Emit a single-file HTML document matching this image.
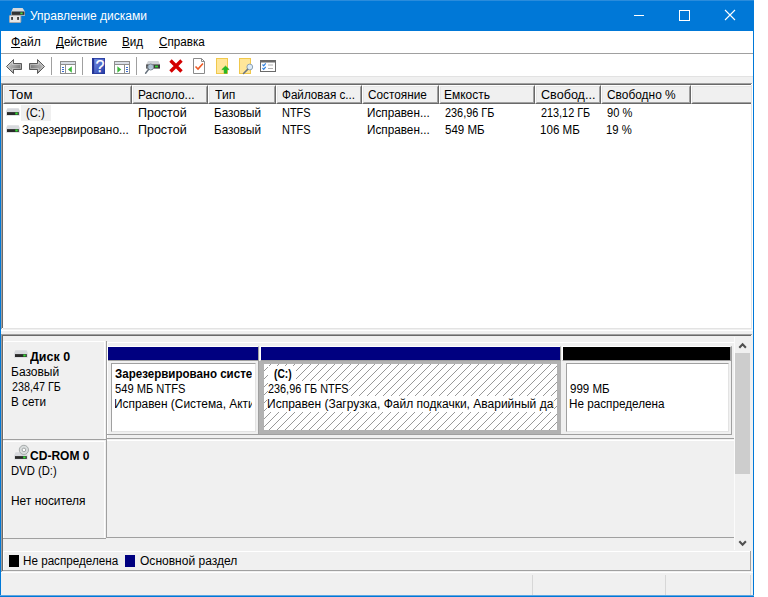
<!DOCTYPE html>
<html lang="ru"><head><meta charset="utf-8"><title>Управление дисками</title>
<style>
html,body{margin:0;padding:0;background:#fff;}
body{width:768px;height:597px;position:relative;overflow:hidden;font:12px "Liberation Sans",sans-serif;color:#000;}
.a{position:absolute;}
.t{position:absolute;white-space:nowrap;font:12px/16px "Liberation Sans",sans-serif;transform-origin:0 50%;}
.b{font-weight:bold;}
#win{position:absolute;left:0;top:0;width:754px;height:597px;background:#f0f0f0;overflow:hidden;}
#title{position:absolute;left:0;top:0;width:754px;height:31px;background:#0078d7;}
#menu{position:absolute;left:1px;top:31px;width:752px;height:22px;background:#fff;}
#tool{position:absolute;left:1px;top:54px;width:752px;height:22px;background:#fff;}
.hc{position:absolute;top:85px;height:19px;box-sizing:border-box;background:#f0f0f0;border-top:1px solid #fff;border-left:1px solid #fff;border-right:1px solid #696969;border-bottom:1px solid #696969;}
.hc i{position:absolute;left:0;top:0;right:0;bottom:0;border-right:1px solid #a0a0a0;border-bottom:1px solid #a0a0a0;border-top:1px solid #e6e6e6;border-left:1px solid #e6e6e6;}
u{text-decoration:underline;text-underline-offset:1px;text-decoration-skip-ink:none;}
</style></head><body>
<div id="win">
 <div id="title"></div><div class="a" style="left:0;top:0;width:754px;height:1px;background:#2a8cdc"></div>
 <div class="t" style="left:30px;top:8px;color:#fff;transform:scaleX(1.000)" id="tt">Управление дисками</div>
 <!-- caption buttons -->
 <svg class="a" style="left:620px;top:0" width="134" height="31" viewBox="0 0 134 31" fill="none" stroke="#fff" stroke-width="1">
  <path d="M14 15.5h10"/><rect x="59.5" y="10.5" width="10" height="10"/><path d="M105 10l10 10M115 10l-10 10" stroke-width="1.1"/>
 </svg>
 <!-- title icon -->
 <svg class="a" style="left:8px;top:7px" width="18" height="17" viewBox="8 7 18 17">
  <path d="M13 8 L22.6 8 L24.8 11.6 L11.4 11.6 Z" fill="#d6d9dc"/>
  <rect x="11.2" y="11.4" width="13.8" height="4.3" fill="#d0d0d0"/>
  <rect x="11.7" y="11.6" width="12.8" height="3.3" fill="#333"/>
  <rect x="20.4" y="12.5" width="2.2" height="1.7" fill="#3fe03f"/>
  <rect x="9.5" y="15.5" width="11.3" height="7" rx="0.6" fill="#e6e6e6" stroke="#b0aca8" stroke-width="0.9"/>
  <rect x="11.2" y="17" width="1.7" height="2.9" fill="#303030"/>
  <rect x="17.2" y="17" width="1.7" height="2.9" fill="#303030"/>
 </svg>
 <div id="menu"></div>
 <div class="a" style="left:1px;top:53px;width:752px;height:1px;background:#a0a0a0"></div>
 <div class="t" style="left:10.74px;top:34px;transform:scaleX(1.007)" id="m1"><u>Ф</u>айл</div>
 <div class="t" style="left:56px;top:34px;transform:scaleX(0.970)" id="m2"><u>Д</u>ействие</div>
 <div class="t" style="left:122.02px;top:34px;transform:scaleX(0.976)" id="m3"><u>В</u>ид</div>
 <div class="t" style="left:158.71px;top:34px;transform:scaleX(0.973)" id="m4"><u>С</u>правка</div>
 <div id="tool"></div>
 <svg class="a" style="left:0;top:54px" width="300" height="22" viewBox="0 54 300 22">
  <defs>
   <linearGradient id="ga" x1="0" y1="0.2" x2="1" y2="0.8"><stop offset="0" stop-color="#cfcfcf"/><stop offset="0.55" stop-color="#9c9c9c"/><stop offset="1" stop-color="#686868"/></linearGradient><linearGradient id="gb" x1="1" y1="0.2" x2="0" y2="0.8"><stop offset="0" stop-color="#c4c4c4"/><stop offset="0.55" stop-color="#969696"/><stop offset="1" stop-color="#6c6c6c"/></linearGradient>
   <linearGradient id="gh" x1="0" y1="0" x2="1" y2="1"><stop offset="0" stop-color="#7c98ee"/><stop offset="1" stop-color="#2238a4"/></linearGradient>
  </defs>
  <!-- back -->
  <path d="M6.5 66.5 L13.5 59.5 L13.5 63.5 L21.5 63.5 L21.5 69.5 L13.5 69.5 L13.5 73.5 Z" fill="url(#ga)" stroke="#5a5a5a" stroke-width="1" stroke-linejoin="round"/><path d="M7.9 66.5 L12.5 61.9 L12.5 64.5 L20.5 64.5 L20.5 68.5 L12.5 68.5 L12.5 71.1 Z" fill="none" stroke="#fff" stroke-opacity="0.35" stroke-width="1"/>
  <!-- forward -->
  <path d="M44.5 66.5 L37.5 59.5 L37.5 63.5 L29.5 63.5 L29.5 69.5 L37.5 69.5 L37.5 73.5 Z" fill="url(#gb)" stroke="#5a5a5a" stroke-width="1" stroke-linejoin="round"/><path d="M43.1 66.5 L38.5 61.9 L38.5 64.5 L30.5 64.5 L30.5 68.5 L38.5 68.5 L38.5 71.1 Z" fill="none" stroke="#fff" stroke-opacity="0.35" stroke-width="1"/>
  <rect x="51" y="57" width="1" height="18" fill="#a0a0a0"/>
  <!-- console tree -->
  <rect x="60.5" y="61.5" width="15" height="12" fill="#fff" stroke="#8e8e8e"/>
  <rect x="61" y="62" width="14" height="2" fill="#d9dde6"/>
  <path d="M60.5 64.5h15M65.5 64.5v9" stroke="#8e8e8e" fill="none"/>
  <path d="M62 67.5h2M62 69.5h2M62 71.5h2" stroke="#3c6cd0"/>
  <path d="M71.8 66.3 L68 69.5 L71.8 72.7 Z" fill="#3cb83c"/>
  <rect x="82" y="57" width="1" height="18" fill="#a0a0a0"/>
  <!-- help -->
  <rect x="92" y="58" width="13" height="16" fill="url(#gh)"/>
  <rect x="92" y="58" width="2.2" height="16" fill="#24348f"/>
  <rect x="92.5" y="58.5" width="12" height="15" fill="none" stroke="#26389a" stroke-opacity="0.8"/>
  <text x="100" y="71.7" text-anchor="middle" font-family="Liberation Sans, sans-serif" font-size="16" fill="#fff" stroke="#fff" stroke-width="0.25">?</text>
  <!-- action pane -->
  <rect x="114.5" y="61.5" width="15" height="12" fill="#fff" stroke="#8e8e8e"/>
  <rect x="115" y="62" width="14" height="2" fill="#d9dde6"/>
  <path d="M114.5 64.5h15M124.5 64.5v9" stroke="#8e8e8e" fill="none"/>
  <path d="M126 67.5h2M126 69.5h2M126 71.5h2" stroke="#3c6cd0"/>
  <path d="M117.4 66.3 L121.2 69.5 L117.4 72.7 Z" fill="#3cb83c"/>
  <rect x="136" y="57" width="1" height="18" fill="#a0a0a0"/>
  <!-- rescan disks -->
  <path d="M148 61 L158.5 61 L160 64.4 L146.2 64.4 Z" fill="#d0d3d7"/>
  <rect x="146.2" y="64.4" width="13.8" height="4.2" fill="#3a3a3a"/>
  <rect x="155" y="65.6" width="3" height="1.8" fill="#35d335"/>
  <circle cx="150.7" cy="67" r="3" fill="#c4dcf0" fill-opacity="0.85" stroke="#7d8894" stroke-width="1"/>
  <path d="M148.6 69.3 L145.6 73.2" stroke="#6a7580" stroke-width="1.5" stroke-linecap="round"/>
  <!-- delete -->
  <path d="M170.5 60.5 L181.5 71.5 M181.5 60.5 L170.5 71.5" stroke="#d40000" stroke-width="3.4" stroke-linecap="butt"/>
  <!-- properties doc -->
  <path d="M193.5 58.5 L201.5 58.5 L204.5 61.5 L204.5 73.5 L193.5 73.5 Z" fill="#fff" stroke="#8a8a8a"/>
  <path d="M201.5 58.5 L201.5 61.5 L204.5 61.5" fill="none" stroke="#8a8a8a"/>
  <path d="M195.5 66.5 L198 69 L203 63.5" fill="none" stroke="#ee5a24" stroke-width="1.6"/>
  <!-- folder up -->
  <rect x="216.5" y="58.5" width="11" height="15" fill="#ffe699" stroke="#f0c84c"/>
  <path d="M225.5 66 L229.2 69.6 L226.9 69.6 L226.9 73.3 L224.1 73.3 L224.1 69.6 L221.8 69.6 Z" fill="#22bc22" stroke="#18a018" stroke-width="0.5"/>
  <!-- folder search -->
  <rect x="239.5" y="58.5" width="11" height="15" fill="#ffe699" stroke="#f0c84c"/>
  <circle cx="249.8" cy="67" r="2.9" fill="#dcebf7" stroke="#8fa3b5" stroke-width="1"/>
  <path d="M247.6 69.4 L243.5 73.5" stroke="#6a7580" stroke-width="1.5" stroke-linecap="round"/>
  <!-- options -->
  <rect x="260.5" y="60.5" width="15" height="11" fill="#fff" stroke="#6a6a6a"/>
  <rect x="261" y="61" width="14" height="1.5" fill="#6a6a6a"/>
  <path d="M262.5 64.5 L263.7 65.8 L265.7 63.3 M262.5 68 L263.7 69.3 L265.7 66.8" fill="none" stroke="#2b7fe0" stroke-width="1.2"/>
  <path d="M268 65h5M268 68.5h5" stroke="#b0b0b0" stroke-width="1"/>
 </svg>
 <div class="a" style="left:1px;top:76px;width:752px;height:1px;background:#e2e2e2"></div>
 <!-- list view -->
 <div class="a" style="left:1px;top:83px;width:752px;height:246px;background:#fff;border-top:1px solid #a0a0a0;border-left:1px solid #a0a0a0;box-sizing:border-box"></div>
 <div class="a" style="left:2px;top:84px;width:749px;height:244px;background:#fff;border-top:1px solid #696969;border-left:1px solid #696969;box-sizing:border-box"></div>
 <div class="hc" style="left:3px;width:129px"><i></i></div>
 <div class="hc" style="left:132px;width:76px"><i></i></div>
 <div class="hc" style="left:208px;width:68px"><i></i></div>
 <div class="hc" style="left:276px;width:86px"><i></i></div>
 <div class="hc" style="left:362px;width:77px"><i></i></div>
 <div class="hc" style="left:439px;width:96px"><i></i></div>
 <div class="hc" style="left:535px;width:66px"><i></i></div>
 <div class="hc" style="left:601px;width:90px"><i></i></div>
 <div class="hc" style="left:691px;width:63px"><i></i></div>
 <div class="t" style="left:9.12px;top:87px;transform:scaleX(1.101)" id="h1">Том</div>
 <div class="t" style="left:137.76px;top:87px;transform:scaleX(0.992)" id="h2">Располо...</div>
 <div class="t" style="left:214.55px;top:87px;transform:scaleX(1.011)" id="h3">Тип</div>
 <div class="t" style="left:281.77px;top:87px;transform:scaleX(0.973)" id="h4">Файловая с...</div>
 <div class="t" style="left:367.81px;top:87px;transform:scaleX(0.982)" id="h5">Состояние</div>
 <div class="t" style="left:444.2px;top:87px;transform:scaleX(0.998)" id="h6">Емкость</div>
 <div class="t" style="left:540.73px;top:87px;transform:scaleX(1.050)" id="h7">Свобод...</div>
 <div class="t" style="left:606.5px;top:87px;transform:scaleX(0.993)" id="h8">Свободно %</div>
 <!-- rows -->
 <div class="a" style="left:21px;top:105px;width:30px;height:16px;background:#f0f0f0"></div>
 <div class="t" style="left:26.3px;top:105px;transform:scaleX(0.935)" id="r1a">(C:)</div>
 <div class="t" style="left:137.71px;top:105px;transform:scaleX(1.041)" id="r1b">Простой</div>
 <div class="t" style="left:213.82px;top:105px;transform:scaleX(0.977)" id="r1c">Базовый</div>
 <div class="t" style="left:281.59px;top:105px;transform:scaleX(0.911)" id="r1d">NTFS</div>
 <div class="t" style="left:367.32px;top:105px;transform:scaleX(0.979)" id="r1e">Исправен...</div>
 <div class="t" style="left:444.55px;top:105px;transform:scaleX(0.907)" id="r1f">236,96 ГБ</div>
 <div class="t" style="left:540.8px;top:105px;transform:scaleX(0.904)" id="r1g">213,12 ГБ</div>
 <div class="t" style="left:606.54px;top:105px;transform:scaleX(0.925)" id="r1h">90 %</div>
 <div class="t" style="left:22.31px;top:122px;transform:scaleX(0.986)" id="r2a">Зарезервировано...</div>
 <div class="t" style="left:137.71px;top:122px;transform:scaleX(1.041)" id="r2b">Простой</div>
 <div class="t" style="left:213.82px;top:122px;transform:scaleX(0.977)" id="r2c">Базовый</div>
 <div class="t" style="left:281.59px;top:122px;transform:scaleX(0.911)" id="r2d">NTFS</div>
 <div class="t" style="left:367.32px;top:122px;transform:scaleX(0.979)" id="r2e">Исправен...</div>
 <div class="t" style="left:444.52px;top:122px;transform:scaleX(0.963)" id="r2f">549 МБ</div>
 <div class="t" style="left:540.29px;top:122px;transform:scaleX(0.965)" id="r2g">106 МБ</div>
 <div class="t" style="left:606.06px;top:122px;transform:scaleX(0.942)" id="r2h">19 %</div>
 <div class="a" style="left:3px;top:328px;width:749px;height:1px;background:#e3e3e3"></div>
 <div class="a" style="left:1px;top:329px;width:752px;height:1px;background:#f0f0f0"></div>
 <div class="a" style="left:1px;top:330px;width:752px;height:1px;background:#fff"></div>
 <div class="a" style="left:751px;top:85px;width:1px;height:244px;background:#e3e3e3"></div>
 <div class="a" style="left:752px;top:83px;width:1px;height:247px;background:#fff"></div>
 <div class="a" style="left:1px;top:334px;width:1px;height:238px;background:#a0a0a0"></div>
 <div class="a" style="left:2px;top:335px;width:1px;height:236px;background:#696969"></div>
 <!-- splitter -->
 <div class="a" style="left:1px;top:334px;width:751px;height:1px;background:#a0a0a0"></div>
 <div class="a" style="left:2px;top:335px;width:749px;height:1px;background:#696969"></div>
 <!-- bottom pane placeholder -->
 <div id="bp">
 <!-- disk 0 label panel -->
 <div class="a" style="left:3px;top:341px;width:102px;height:1px;background:#fff"></div>
 <div class="a" style="left:3px;top:341px;width:1px;height:98px;background:#fff"></div>
 <div class="a" style="left:104px;top:341px;width:1px;height:98px;background:#fff"></div>
 <div class="a" style="left:3px;top:439px;width:103px;height:1px;background:#a0a0a0"></div>
 <div class="a" style="left:106px;top:341px;width:1px;height:197px;background:#a0a0a0"></div>
 <div class="a" style="left:107px;top:342px;width:1px;height:96px;background:#fff"></div>
 <div class="a" style="left:107px;top:342px;width:627px;height:1px;background:#fff"></div>
 <div class="a" style="left:107px;top:434px;width:625px;height:1px;background:#a0a0a0"></div>
 <div class="a" style="left:107px;top:440px;width:627px;height:1px;background:#fff"></div>
 <div class="a" style="left:107px;top:438px;width:627px;height:1px;background:#a0a0a0"></div>
 <!-- cdrom label panel -->
 <div class="a" style="left:3px;top:441px;width:102px;height:1px;background:#fff"></div>
 <div class="a" style="left:3px;top:441px;width:1px;height:97px;background:#fff"></div>
 <div class="a" style="left:104px;top:441px;width:1px;height:97px;background:#fff"></div>
 <div class="a" style="left:3px;top:538px;width:103px;height:1px;background:#a0a0a0"></div>
 <div class="a" style="left:107px;top:537px;width:627px;height:1px;background:#a0a0a0"></div>
 <!-- partition 1 -->
 <div class="a" style="left:108px;top:346px;width:151px;height:15px;box-sizing:border-box;background:#000080;border-top:1px solid #fff;border-right:1px solid #a0a0a0;border-bottom:1px solid #a0a0a0"></div>
 <div class="a" style="left:111px;top:363px;width:145px;height:69px;box-sizing:border-box;background:#fff;border-top:1px solid #a0a0a0;border-left:1px solid #a0a0a0;border-right:1px solid #e3e3e3;border-bottom:1px solid #e3e3e3"></div>
 <div class="a" style="left:115px;top:365px;width:137px;height:50px;overflow:hidden">
  <div class="t b" style="left:0.16px;top:1px;transform:scaleX(0.963)" id="p1a">Зарезервировано системой</div>
  <div class="t" style="left:-0.06px;top:16px;transform:scaleX(0.928)" id="p1b">549 МБ NTFS</div>
  <div class="t" style="left:-0.59px;top:31px;transform:scaleX(0.991)" id="p1c">Исправен (Система, Активен, Основной раздел)</div>
 </div>
 <!-- partition 2 (selected) -->
 <div class="a" style="left:260px;top:346px;width:301px;height:15px;box-sizing:border-box;background:#000080;border-top:1px solid #fff;border-left:1px solid #fff;border-right:1px solid #a0a0a0;border-bottom:1px solid #a0a0a0"></div>
 <div class="a" style="left:259px;top:361px;width:302px;height:73px;box-sizing:border-box;border:solid #b2b2b2;border-width:3px 4px 4px 5px;background-color:#fff;background-image:repeating-linear-gradient(135deg,transparent 0,transparent 4.95px,#989898 4.95px,#989898 5.657px);background-size:8px 8px;background-position:-1px 0px;"></div>
 <div class="a" style="left:268px;top:366px;width:28px;height:15px;background:#fff"></div>
 <div class="a" style="left:264px;top:365px;width:290px;height:50px;overflow:hidden">
  <div class="t b" style="left:10.27px;top:1px;background:#fff;transform:scaleX(0.851)" id="p2a">(C:)</div>
  <div class="t" style="left:3.95px;top:16px;background:#fff;transform:scaleX(0.905)" id="p2b">236,96 ГБ NTFS</div>
  <div class="t" style="left:3.4px;top:31px;background:#fff;transform:scaleX(1.001)" id="p2c">Исправен (Загрузка, Файл подкачки, Аварийный дамп памяти, Основной раздел)</div>
 </div>
 <!-- partition 3 (unallocated) -->
 <div class="a" style="left:562px;top:346px;width:170px;height:15px;box-sizing:border-box;background:#000;border-top:1px solid #fff;border-left:1px solid #fff;border-right:2px solid #a0a0a0;border-bottom:1px solid #a0a0a0"></div>
 <div class="a" style="left:258px;top:361px;width:1px;height:74px;background:#a0a0a0"></div>
 <div class="a" style="left:731px;top:361px;width:1px;height:74px;background:#a0a0a0"></div>
 <div class="a" style="left:566px;top:363px;width:163px;height:69px;box-sizing:border-box;background:#fff;border-top:1px solid #a0a0a0;border-left:1px solid #a0a0a0;border-right:1px solid #e3e3e3;border-bottom:1px solid #e3e3e3"></div>
 <div class="t" style="left:569.52px;top:381px;transform:scaleX(0.961)" id="p3a">999 МБ</div>
 <div class="t" style="left:569.02px;top:396px;transform:scaleX(0.976)" id="p3b">Не распределена</div>
 <!-- disk labels -->
 <div class="t b" style="left:30.1px;top:349px;transform:scaleX(1.038)" id="d0a">Диск 0</div>
 <div class="t" style="left:11.4px;top:364px;transform:scaleX(1.001)" id="d0b">Базовый</div>
 <div class="t" style="left:11.95px;top:379px;transform:scaleX(0.898)" id="d0c">238,47 ГБ</div>
 <div class="t" style="left:11.42px;top:394px;transform:scaleX(0.976)" id="d0d">В сети</div>
 <div class="t b" style="left:29.6px;top:448px;transform:scaleX(1.003)" id="c0a">CD-ROM 0</div>
 <div class="t" style="left:11.46px;top:463px;transform:scaleX(0.938)" id="c0b">DVD (D:)</div>
 <div class="t" style="left:11.4px;top:493px;transform:scaleX(0.995)" id="c0c">Нет носителя</div>
 <!-- scrollbar -->
 <div class="a" style="left:735px;top:336px;width:16px;height:214px;background:#f0f0f0"></div>
 <div class="a" style="left:735px;top:353px;width:15px;height:121px;background:#cdcdcd"></div>
 <svg class="a" style="left:735px;top:336px" width="16" height="214" viewBox="0 0 16 214" fill="none" stroke="#505050" stroke-width="2.1"><path d="M4.3 11.7l3.3-3.4l3.3 3.4"/><path d="M4.3 205.3l3.3 3.4l3.3-3.4"/></svg>
 <div class="a" style="left:734px;top:337px;width:1px;height:213px;background:#fbfbfb"></div>
 <!-- legend -->
 <div class="a" style="left:3px;top:551px;width:748px;height:1px;background:#fff"></div>
 <div class="a" style="left:3px;top:551px;width:1px;height:19px;background:#fff"></div>
 <div class="a" style="left:3px;top:570px;width:748px;height:1px;background:#a0a0a0"></div>
 <div class="a" style="left:750px;top:551px;width:1px;height:20px;background:#a0a0a0"></div>
 <div class="a" style="left:9px;top:555px;width:10px;height:12px;background:#000"></div>
 <div class="t" style="left:23.03px;top:553px;transform:scaleX(0.972)" id="l1">Не распределена</div>
 <div class="a" style="left:125px;top:555px;width:10px;height:12px;background:#000080"></div>
 <div class="t" style="left:139.5px;top:553px;transform:scaleX(1.003)" id="l2">Основной раздел</div>
 <!-- status bar -->
 <div class="a" style="left:1px;top:572px;width:752px;height:1px;background:#fff"></div>
 <div class="a" style="left:532px;top:575px;width:1px;height:21px;background:#d7d7d7"></div>
 <div class="a" style="left:665px;top:575px;width:1px;height:21px;background:#d7d7d7"></div>
 <div class="a" style="left:750px;top:575px;width:1px;height:21px;background:#d7d7d7"></div>
 </div>
 <!-- list row icons -->
 <svg class="a" style="left:6px;top:108px" width="15" height="10" viewBox="0 0 15 10">
  <path d="M1.3 0.2 L12.7 0.2 L13.8 3 L13.8 7.7 L0.2 7.7 L0.2 3 Z" fill="#d7d9dd"/><rect x="1" y="4.1" width="11.8" height="2.9" fill="#2a2a2a"/><rect x="9.3" y="4.5" width="2.4" height="2" fill="#35e035"/>
 </svg>
 <svg class="a" style="left:6px;top:125px" width="15" height="10" viewBox="0 0 15 10">
  <path d="M1.3 0.2 L12.7 0.2 L13.8 3 L13.8 7.7 L0.2 7.7 L0.2 3 Z" fill="#d7d9dd"/><rect x="1" y="4.1" width="11.8" height="2.9" fill="#2a2a2a"/><rect x="9.3" y="4.5" width="2.4" height="2" fill="#35e035"/>
 </svg>
 <!-- disk 0 icon -->
 <svg class="a" style="left:14px;top:350px" width="15" height="10" viewBox="0 0 15 10">
  <path d="M1.3 0.2 L12.7 0.2 L13.8 3 L13.8 7.7 L0.2 7.7 L0.2 3 Z" fill="#d7d9dd"/><rect x="1" y="4.1" width="11.8" height="2.9" fill="#2a2a2a"/><rect x="9.3" y="4.5" width="2.4" height="2" fill="#35e035"/>
 </svg>
 <!-- cdrom icon -->
 <svg class="a" style="left:14px;top:444px" width="16" height="17" viewBox="0 0 16 17">
  <path d="M1.6 8.2 L12.6 8.2 L13.7 11.6 L13.7 15.5 L0.2 15.5 L0.2 11.6 Z" fill="#d7d9dd"/>
  <circle cx="9.9" cy="5.9" r="4.6" fill="#d9dddd" stroke="#a6aaaa" stroke-width="1"/>
  <circle cx="9.9" cy="5.9" r="1.8" fill="#fff" stroke="#a0a4a4" stroke-width="1"/>
  <rect x="1" y="12.1" width="11.8" height="2.8" fill="#2a2a2a"/><rect x="9.2" y="12.4" width="2.4" height="2" fill="#35e035"/>
 </svg>
 <!-- window border -->
 <div class="a" style="left:0;top:31px;width:1px;height:566px;background:#0078d7"></div>
 <div class="a" style="left:753px;top:31px;width:1px;height:566px;background:#0078d7"></div>
 <div class="a" style="left:0;top:595px;width:754px;height:1px;background:#5ea7e2"></div>
 <div class="a" style="left:0;top:596px;width:754px;height:1px;background:#0078d7"></div>
</div>
</body></html>
